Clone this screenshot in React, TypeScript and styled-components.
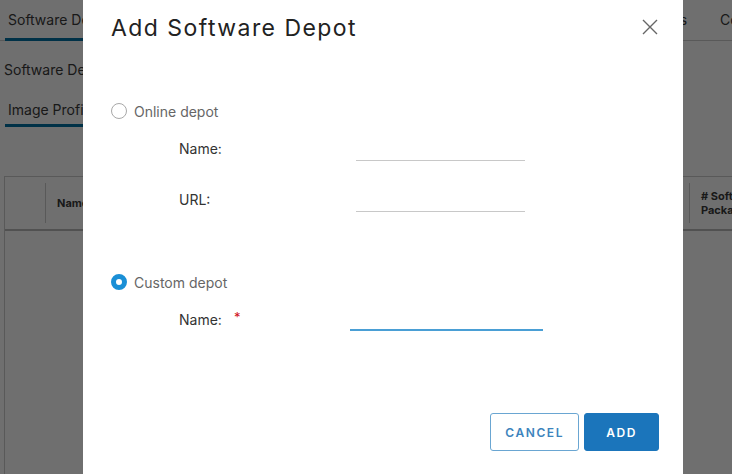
import React from 'react';
import styled, { createGlobalStyle } from 'styled-components';

const GlobalStyle = createGlobalStyle`
  html, body {
    margin: 0;
    padding: 0;
    width: 732px;
    height: 474px;
    overflow: hidden;
    background: #ffffff;
  }
  body {
    font-family: Inter, "Liberation Sans", sans-serif;
    color: #313131;
  }
`;

const Page = styled.div`
  position: relative;
  width: 732px;
  height: 474px;
  overflow: hidden;
`;

/* ---------- background app (dimmed by backdrop) ---------- */

const TabBar = styled.nav`
  display: flex;
  gap: 27px;
  height: 40px;
  padding-left: 5px;
  border-bottom: 1px solid #cccccc;
  white-space: nowrap;
`;

const Tab = styled.div<{ $active?: boolean }>`
  display: flex;
  align-items: center;
  padding: 0 3px;
  font-size: 14px;
  color: #3a3a3a;
  border-bottom: 3px solid ${(p) => (p.$active ? '#0072a3' : 'transparent')};
  margin-bottom: -1px;
`;

const SectionTitle = styled.div`
  padding: 19px 0 0 4px;
  font-size: 14px;
  line-height: 20px;
  color: #3a3a3a;
`;

const SubTabs = styled.div`
  display: flex;
  gap: 30px;
  margin-top: 20px;
  padding-left: 5px;
  white-space: nowrap;
`;

const SubTab = styled.div<{ $active?: boolean }>`
  padding: 0 3px 4px;
  font-size: 14px;
  line-height: 20px;
  color: #3a3a3a;
  border-bottom: 3px solid ${(p) => (p.$active ? '#0072a3' : 'transparent')};
`;

const Grid = styled.div`
  margin: 49px 0 0 4px;
  width: 900px;
  height: 300px;
  border: 1px solid #cccccc;
`;

const GridHead = styled.div`
  display: grid;
  grid-template-columns: 40px 644px 1fr;
  height: 52px;
  border-bottom: 2px solid #bbbbbb;
`;

const HeadCell = styled.div<{ $sep?: boolean }>`
  position: relative;
  display: flex;
  align-items: center;
  padding-left: 12px;
  font-size: 11px;
  font-weight: 700;
  line-height: 14px;
  color: #3a3a3a;
  &::before {
    content: '';
    display: ${(p) => (p.$sep ? 'block' : 'none')};
    position: absolute;
    left: 0;
    top: 6px;
    bottom: 6px;
    border-left: 1px solid #cccccc;
  }
`;

const Backdrop = styled.div`
  position: absolute;
  inset: 0;
  background: rgba(0, 0, 0, 0.565);
`;

/* ---------- modal ---------- */

const Modal = styled.div`
  position: absolute;
  left: 83px;
  top: 0;
  width: 600px;
  height: 474px;
  background: #ffffff;
  box-sizing: border-box;
  padding: 13px 24px 0 28px;
  display: flex;
  flex-direction: column;
`;

const Header = styled.div`
  display: flex;
  justify-content: space-between;
  align-items: flex-start;
`;

const Title = styled.h3`
  margin: 0;
  font-size: 23px;
  font-weight: 400;
  line-height: 30px;
  letter-spacing: 1.45px;
  color: #222222;
`;

const Close = styled.button`
  border: 0;
  background: none;
  padding: 0;
  margin: 6px 1px 0 0;
  width: 16px;
  height: 16px;
  cursor: pointer;
  display: flex;
`;

const RadioRow = styled.label<{ $space: number }>`
  display: flex;
  align-items: center;
  gap: 7px;
  height: 20px;
  margin-top: ${(p) => p.$space}px;
  font-size: 14px;
  color: #666666;
`;

const RadioDot = styled.span<{ $checked?: boolean }>`
  box-sizing: border-box;
  width: 16px;
  height: 16px;
  border-radius: 50%;
  border: ${(p) => (p.$checked ? '5px solid #1a8fd6' : '1px solid #a8a8a8')};
  background: #ffffff;
`;

const FieldRow = styled.div<{ $space: number; $label: number }>`
  display: grid;
  grid-template-columns: ${(p) => p.$label}px auto;
  align-items: center;
  margin-top: ${(p) => p.$space}px;
  padding-left: 68px;
`;

const Label = styled.span`
  font-size: 14px;
  color: #333333;
`;

const Required = styled.span`
  color: #d0101b;
  font-size: 13px;
  margin-left: 12px;
  vertical-align: 3px;
`;

const Input = styled.input<{ $width: number; $focus?: boolean }>`
  box-sizing: border-box;
  width: ${(p) => p.$width}px;
  height: 26px;
  border: 0;
  border-bottom: ${(p) => (p.$focus ? '2px solid #4a9fd5' : '1px solid #c8c8c8')};
  outline: none;
  padding: 0;
  font: inherit;
  background: transparent;
`;

const Footer = styled.div`
  display: flex;
  justify-content: flex-end;
  gap: 5px;
  margin-top: 82px;
`;

const Button = styled.button<{ $primary?: boolean }>`
  box-sizing: border-box;
  height: 38px;
  padding: 0 ${(p) => (p.$primary ? 21 : 14)}px;
  border-radius: 3px;
  border: 1px solid ${(p) => (p.$primary ? '#1b75bb' : '#6aa6d2')};
  background: ${(p) => (p.$primary ? '#1b75bb' : '#ffffff')};
  color: ${(p) => (p.$primary ? '#ffffff' : '#3d84bd')};
  font-family: Inter, "Liberation Sans", sans-serif;
  font-size: 12px;
  font-weight: 600;
  letter-spacing: 1.6px;
  cursor: pointer;
`;

export default function App() {
  return (
    <Page>
      <GlobalStyle />
      <TabBar>
        <Tab $active>Software Depots</Tab>
        <Tab>Image Profiles</Tab>
        <Tab>Auto Deploy Rules</Tab>
        <Tab>Deployed Hosts</Tab>
        <Tab>Discovered Hosts</Tab>
        <Tab>Configuration</Tab>
      </TabBar>
      <SectionTitle>Software Depots</SectionTitle>
      <SubTabs>
        <SubTab $active>Image Profiles</SubTab>
        <SubTab>Software Packages</SubTab>
      </SubTabs>
      <Grid>
        <GridHead>
          <HeadCell />
          <HeadCell $sep>Name</HeadCell>
          <HeadCell $sep>
            # Software
            <br />
            Packages
          </HeadCell>
        </GridHead>
      </Grid>
      <Backdrop />

      <Modal>
        <Header>
          <Title>Add Software Depot</Title>
          <Close aria-label="Close">
            <svg width="16" height="16" viewBox="0 0 16 16">
              <path d="M1 1 L15 15 M15 1 L1 15" stroke="#666666" strokeWidth="1.4" fill="none" />
            </svg>
          </Close>
        </Header>

        <RadioRow $space={58}>
          <RadioDot />
          Online depot
        </RadioRow>
        <FieldRow $space={14} $label={177}>
          <Label>Name:</Label>
          <Input $width={169} />
        </FieldRow>
        <FieldRow $space={25} $label={177}>
          <Label>URL:</Label>
          <Input $width={169} />
        </FieldRow>

        <RadioRow $space={60}>
          <RadioDot $checked />
          Custom depot
        </RadioRow>
        <FieldRow $space={13} $label={171}>
          <Label>
            Name:<Required>*</Required>
          </Label>
          <Input $width={193} $focus />
        </FieldRow>

        <Footer>
          <Button>CANCEL</Button>
          <Button $primary>ADD</Button>
        </Footer>
      </Modal>
    </Page>
  );
}
